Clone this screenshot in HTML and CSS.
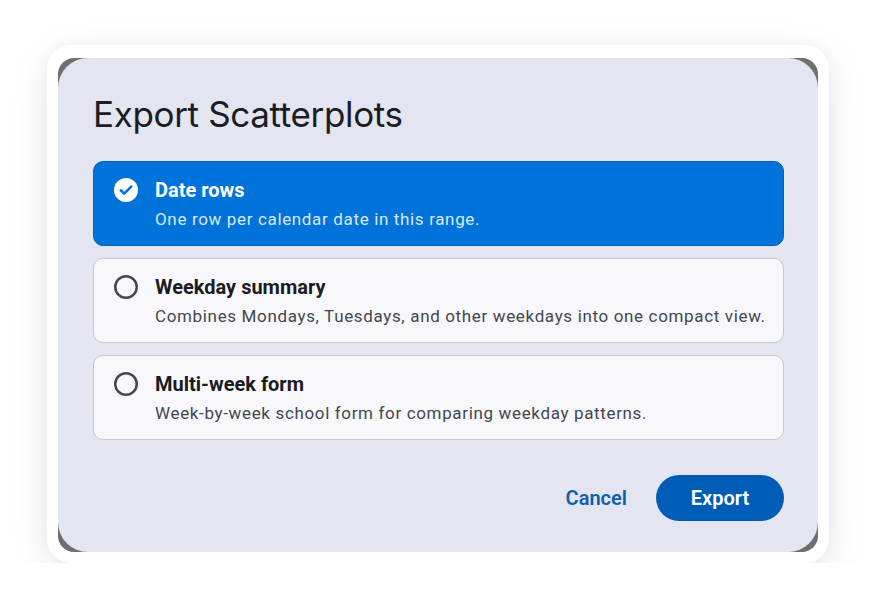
FILE: index.html
```html
<!DOCTYPE html>
<html lang="en">
<head>
    <meta charset="UTF-8">
    <meta name="viewport" content="width=device-width, initial-scale=1.0">
    <title>Export Scatterplots</title>
    <link rel="stylesheet" href="styles.css">
</head>
<body>
    <div class="frame">
        <div class="backdrop">
            <div class="dialog">
                <h2 class="dialog-title">Export Scatterplots</h2>

                <div class="options">
                    <!-- selected option -->
                    <div class="option selected">
                        <svg class="radio" viewBox="0 0 24 24" width="24" height="24">
                            <circle cx="12" cy="12" r="12" fill="#fff"/>
                            <path d="M6.8 12.3l3.4 3.3 7-7" fill="none" stroke="#0073da" stroke-width="2.6" stroke-linecap="round" stroke-linejoin="round"/>
                        </svg>
                        <div class="option-text">
                            <div class="option-title">Date rows</div>
                            <div class="option-desc">One row per calendar date in this range.</div>
                        </div>
                    </div>

                    <div class="option">
                        <svg class="radio" viewBox="0 0 24 24" width="24" height="24">
                            <circle cx="12" cy="12" r="10.75" fill="none" stroke="#45474f" stroke-width="2.5"/>
                        </svg>
                        <div class="option-text">
                            <div class="option-title">Weekday summary</div>
                            <div class="option-desc">Combines Mondays, Tuesdays, and other weekdays into one compact view.</div>
                        </div>
                    </div>

                    <div class="option">
                        <svg class="radio" viewBox="0 0 24 24" width="24" height="24">
                            <circle cx="12" cy="12" r="10.75" fill="none" stroke="#45474f" stroke-width="2.5"/>
                        </svg>
                        <div class="option-text">
                            <div class="option-title">Multi-week form</div>
                            <div class="option-desc">Week-by-week school form for comparing weekday patterns.</div>
                        </div>
                    </div>
                </div>

                <div class="actions">
                    <button class="btn-text">Cancel</button>
                    <button class="btn-filled">Export</button>
                </div>
            </div>
        </div>
    </div>
</body>
</html>
```

FILE: styles.css
```css
body {
    margin: 0;
    padding: 0;
    background: #fff;
    font-family: Roboto, Arial, sans-serif;
}
.frame {
    margin: 45px 0 0 47px;
    width: 782px;
    height: 518px;
    box-sizing: border-box;
    padding: 13px 11px 11px 11px;
    background: #fff;
    border-radius: 24px;
    box-shadow: 0 10px 40px rgba(0, 0, 0, 0.09), 0 0 14px rgba(0, 0, 0, 0.04);
}
.backdrop {
    height: 100%;
    background: #6f6f70;
    border-radius: 16px;
}
.dialog {
    height: 100%;
    box-sizing: border-box;
    background: #e3e5f0;
    border-radius: 30px;
    padding: 36px 34px 0 35px;
    display: flex;
    flex-direction: column;
}
.dialog-title {
    margin: 0 0 27px 0;
    font-family: Inter, "Open Sans", sans-serif;
    font-weight: 400;
    font-size: 35px;
    line-height: 40px;
    letter-spacing: -0.35px;
    color: #1b1c24;
}
.options {
    display: flex;
    flex-direction: column;
    gap: 12px;
}
.option {
    display: flex;
    align-items: flex-start;
    gap: 17px;
    padding: 15px 8px 14px 20px;
    background: #f8f8fc;
    border: 1px solid #c6c8d2;
    border-radius: 10px;
}
.option.selected {
    background: #0073da;
    border-color: #0b5fb6;
}
.radio {
    flex: none;
    margin-top: 1px;
}
.option-text {
    white-space: nowrap;
}
.option-title {
    font-size: 20px;
    line-height: 26px;
    font-weight: 700;
    color: #1b1c22;
}
.option-desc {
    margin-top: 4px;
    font-size: 17px;
    line-height: 24px;
    letter-spacing: 0.65px;
    color: #44464e;
}
.selected .option-title {
    color: #fff;
}
.selected .option-desc {
    color: #d9e8fb;
}
.actions {
    display: flex;
    justify-content: flex-end;
    align-items: center;
    gap: 11px;
    margin-top: 35px;
}
.btn-text, .btn-filled {
    font-family: Roboto, Arial, sans-serif;
    font-size: 20px;
    font-weight: 600;
    border: none;
    cursor: pointer;
    height: 46px;
    border-radius: 23px;
}
.btn-text {
    background: none;
    color: #0f5fae;
    padding: 0 18px;
}
.btn-filled {
    background: #005db7;
    color: #fff;
    width: 128px;
}
```
